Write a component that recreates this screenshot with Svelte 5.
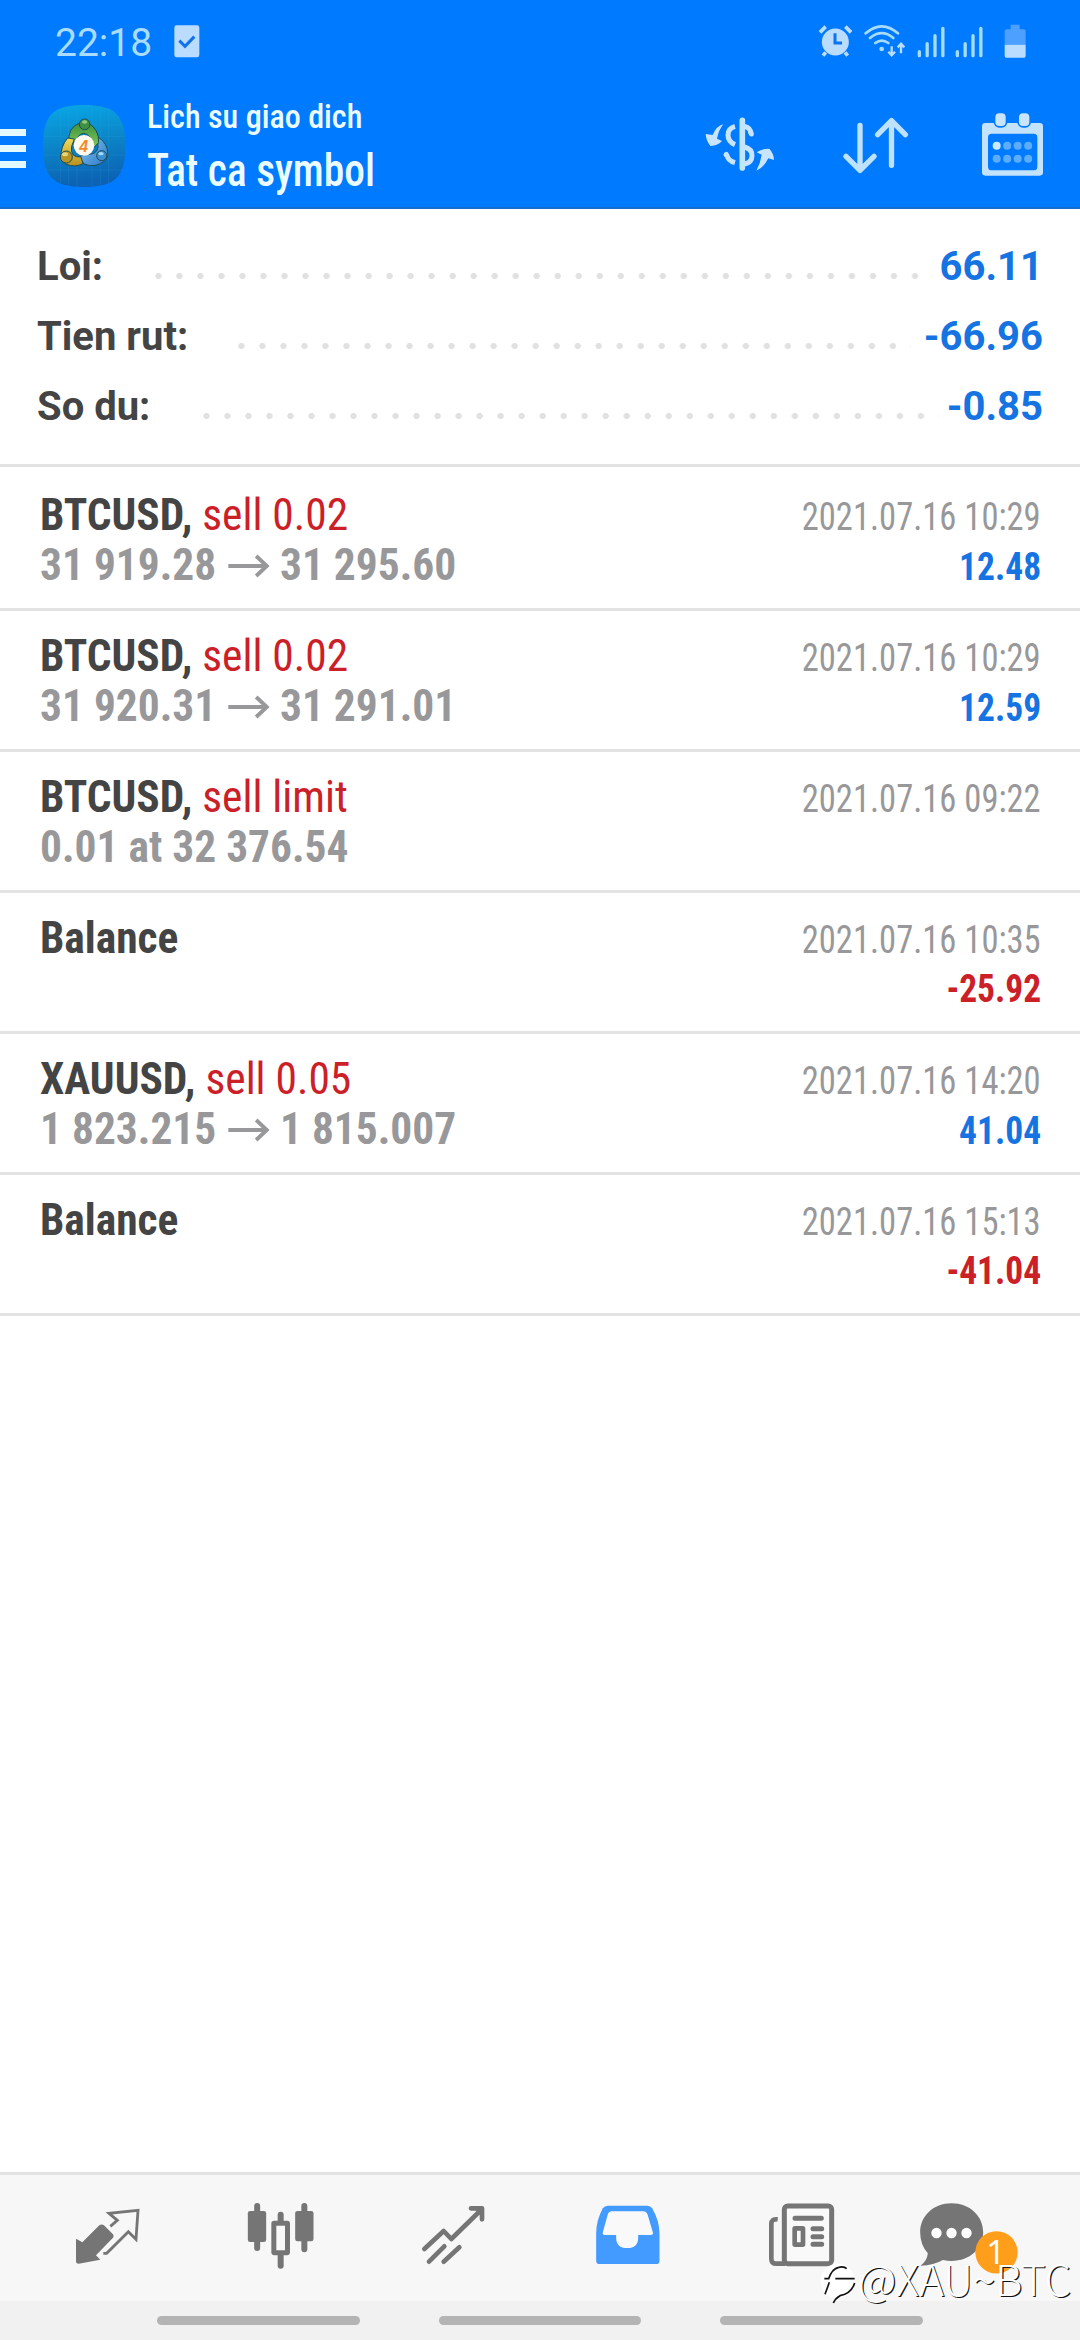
<script>
  const summary = [
    { label: 'Loi:', value: '66.11', start: 118, dots: 37 },
    { label: 'Tien rut:', value: '-66.96', start: 201, dots: 32 },
    { label: 'So du:', value: '-0.85', start: 166, dots: 35 },
  ];

  const deals = [
    { title: 'BTCUSD,', action: 'sell 0.02', from: '31 919.28', to: '31 295.60', time: '2021.07.16 10:29', amount: '12.48' },
    { title: 'BTCUSD,', action: 'sell 0.02', from: '31 920.31', to: '31 291.01', time: '2021.07.16 10:29', amount: '12.59' },
    { title: 'BTCUSD,', action: 'sell limit', from: '0.01 at 32 376.54', time: '2021.07.16 09:22' },
    { title: 'Balance', time: '2021.07.16 10:35', amount: '-25.92' },
    { title: 'XAUUSD,', action: 'sell 0.05', from: '1 823.215', to: '1 815.007', time: '2021.07.16 14:20', amount: '41.04' },
    { title: 'Balance', time: '2021.07.16 15:13', amount: '-41.04' },
  ];
</script>

<div class="screen">
  <header>
    <div class="status">
      <span class="clock">22:18</span>
      <svg class="task" width="26" height="33" viewBox="0 0 78 99">
        <rect x="1" y="1" width="75" height="96" rx="7" fill="#b9dcff" />
        <path d="M16 47l17 17 28-29" fill="none" stroke="#1272ec" stroke-width="9" />
      </svg>
      <div class="indicators">
        <svg width="36.7" height="36.7" viewBox="410 70 110 110">
          <g stroke="#b9dcff" stroke-width="11" fill="none">
            <path d="M419 98l17-17M495 81l17 17" />
            <path d="M436 158l-8 10M494 158l8 10" />
          </g>
          <circle cx="465" cy="127" r="40.500" fill="#b9dcff" />
          <path d="M464 101v29h21" fill="none" stroke="#0b74f0" stroke-width="9" />
        </svg>
        <svg class="wifi" width="44" height="36.7" viewBox="548 70 132 110">
          <g stroke="#a9dcfc" stroke-width="8" fill="none" stroke-linecap="round">
            <path d="M556 101q48-42 97 0M569 115q35-29 70 0M585 130q19-14 39 0" />
          </g>
          <circle cx="604" cy="148" r="7" fill="#a9dcfc" />
          <g stroke="#b9dcff" stroke-width="7" fill="none">
            <path d="M634 140v26M624 156l10 11 10-11M662 161v-27M652 143l10-11 10 11" />
          </g>
        </svg>
        {#each [1, 2] as sim (sim)}
          <svg class="signal" width="30" height="36.7" viewBox="706 70 90 110">
            <path d="M716 156v12M739.500 132v36M763 108v60M786.500 86v82" stroke="#a5dcf8" stroke-width="10" stroke-linecap="round" />
          </svg>
        {/each}
        <svg class="battery" width="24" height="36.7" viewBox="970 70 72 110">
          <path d="M993 75h27v14h13q5 0 5 5v41h-63v-41q0-5 5-5h13z" fill="#4da0ff" />
          <path d="M975 135h63v34q0 5-5 5h-53q-5 0-5-5z" fill="#b9dcff" />
        </svg>
      </div>
    </div>

    <div class="toolbar">
      <div class="burger"><i></i><i></i><i></i></div>
      <svg class="logo" width="82.300" height="82" viewBox="128 315 247 246">
        <defs>
          <linearGradient id="tile" x1="0" y1="0" x2="0.15" y2="1">
            <stop offset="0" stop-color="#08a8e8" />
            <stop offset="0.5" stop-color="#0b86c8" />
            <stop offset="1" stop-color="#0c62b4" />
          </linearGradient>
          <linearGradient id="leaf" x1="0" y1="0" x2="0" y2="1">
            <stop offset="0" stop-color="#3e8f3a" /><stop offset="1" stop-color="#7ccb5c" />
          </linearGradient>
          <linearGradient id="gold" x1="0" y1="0" x2="0" y2="1">
            <stop offset="0" stop-color="#f0dc5c" /><stop offset="1" stop-color="#b98f1c" />
          </linearGradient>
          <linearGradient id="sky" x1="0" y1="0" x2="1" y2="1">
            <stop offset="0" stop-color="#8fd0f5" /><stop offset="1" stop-color="#2472c4" />
          </linearGradient>
        </defs>
        <path d="M251 315C345 315 375 345 375 438S345 561 251 561 128 531 128 438 158 315 251 315z" fill="url(#tile)" />
        <path d="M180 325v226M205 319v238M230 317v242M275 317v242M300 319v238M325 325v226M134 375h236M130 410h243M130 465h243M134 510h236" stroke="#3cb0e0" stroke-width="1.500" opacity="0.3" />
        <g stroke="#1c4d58" stroke-width="3">
          <path d="M292 410q32 20 31 56l-8 16q-30 24-64 10l-14-22 22-8q28 4 34-18z" fill="url(#sky)" />
          <path d="M207 432q-8-51 34-64l22 0q34 20 32 60l-14 14q-10-42-32-42-16 4-22 22z" fill="url(#leaf)" />
          <path d="M202 414q-22 26-20 60l14 18q28 12 52-1l-6-20q-34 2-28-32l8-22z" fill="url(#gold)" />
          <circle cx="253" cy="373" r="16" fill="#3f8f45" />
          <circle cx="198" cy="471" r="18" fill="#b79524" />
          <circle cx="304" cy="467" r="15" fill="#3d8fd2" />
        </g>
        <ellipse cx="253" cy="366" rx="8" ry="5" fill="#8fca80" />
        <ellipse cx="194" cy="463" rx="9" ry="6" fill="#e8d478" />
        <ellipse cx="302" cy="461" rx="8" ry="5" fill="#a4dcf8" />
        <circle cx="251" cy="436" r="31" fill="#fffaf0" />
        <text x="250" y="455" text-anchor="middle" class="four">4</text>
      </svg>
      <div class="heading">
        <div class="sub"><span>Lich su giao dich</span></div>
        <div class="main"><span>Tat ca symbol</span></div>
      </div>
      <div class="actions">
        <svg width="73.300" height="70" viewBox="70 330 220 210">
          <path d="M188 361v143" stroke="#bfe6fc" stroke-width="17" stroke-linecap="round" />
          <g fill="none" stroke="#c9e4fd" stroke-width="15">
            <path d="M166 379q-21 6-21 26t21 29M195 379q18 4 19 22M195 441q22 6 22 26t-22 25M166 488q-22-6-25-25" />
            <path d="M213 396l2 6M140 463l-1 1" stroke-linecap="round" />
          </g>
          <path d="M131 373q-20 4-32 32l-21-3q1 20 14 36 24-2 35-15l-15-7q5-26 19-43zM230 512q22-8 36-37l17 5q0-19-14-34-24 0-38 11l15 7q-3 24-16 48z" fill="#c9e4fd" />
        </svg>
        <svg class="sort" width="66.700" height="70" viewBox="490 330 200 210">
          <path d="M541 376v134M499 469l42 42 42-42M635.500 496v-134M594 404l41.500-42 41.500 42" fill="none" stroke="#bfe2fc" stroke-width="16" stroke-linecap="round" stroke-linejoin="round" />
        </svg>
        <svg class="calendar" width="65" height="70" viewBox="900 330 195 210">
          <path fill-rule="evenodd" d="M916 369h163q10 0 10 10v138q0 10-10 10H916q-10 0-10-10V379q0-10 10-10zM935 401q-11 0-11 11v88q0 11 11 11h126q11 0 11-11v-88q0-11-11-11z" fill="#c3e2fc" />
          <rect x="941" y="335" width="41" height="48" rx="17" fill="#007aff" />
          <rect x="1012" y="335" width="41" height="48" rx="17" fill="#007aff" />
          <rect x="946" y="340" width="31" height="38" rx="12" fill="#c9e4fd" />
          <rect x="1017" y="340" width="31" height="38" rx="12" fill="#c9e4fd" />
          <g fill="#5dadff">
            {#each [981.5, 1013, 1044.5] as cx (cx)}<circle {cx} cy="437" r="12" />{/each}
            {#each [950, 981.5, 1013, 1044.5] as cx (cx)}<circle {cx} cy="476" r="12" />{/each}
          </g>
          <circle cx="950" cy="437" r="12" fill="#c9e9ff" />
        </svg>
      </div>
    </div>
  </header>

  <section class="summary">
    {#each summary as row (row.label)}
      <div class="sum-row">
        <span class="label" style:width="{row.start}px">{row.label}</span>
        <span class="dots" style:width="{row.dots * 21.02}px"></span>
        <span class="value">{row.value}</span>
      </div>
    {/each}
  </section>

  <main>
    {#each deals as deal, i (i)}
      <article>
        <div class="line">
          <span class="title">{deal.title}{#if deal.action}&nbsp;<span class="action">{deal.action}</span>{/if}</span>
          <span class="time">{deal.time}</span>
        </div>
        <div class="line">
          <span class="prices">{deal.from ?? ''}{#if deal.to}<svg class="arrow" width="43" height="24" viewBox="0 0 43 24"><path d="M0 12h40M29 2l11 10-11 10" fill="none" stroke="#98989a" stroke-width="4" /></svg>{deal.to}{/if}</span>
          {#if deal.amount}
            <span class="amount" class:loss={deal.amount.startsWith('-')}>{deal.amount}</span>
          {/if}
        </div>
      </article>
    {/each}
  </main>

  <nav>
    <svg viewBox="-117 0 520.500 300">
      <path d="M48 146l19 11 51-51q7-5 14 0l27 27q4 5 0 10l-51 53 13 13-65 12q-8 0-8-8z" fill="#757575" />
      <path d="M151 109l21-18-25-21 87-9-6 87-23-23-65 65-10 0" fill="none" stroke="#757575" stroke-width="8.500" stroke-linejoin="miter" />
    </svg>
    <svg viewBox="403.500 0 520.500 300">
      <path d="M590 48v126M731.500 48v130M660.500 74v20M660.500 194v33" stroke="#757575" stroke-width="18" stroke-linecap="round" />
      <rect x="562" y="63" width="55" height="93" rx="7" fill="#757575" />
      <rect x="704" y="63" width="55" height="91" rx="7" fill="#757575" />
      <rect x="640" y="100" width="41" height="88" rx="1" fill="#f9f9f9" stroke="#757575" stroke-width="15" />
    </svg>
    <svg viewBox="924 0 520.500 300">
      <path d="M1093 177l58-54 23 24 89-87M1233 55h33v33M1107 215l46-46M1151 215l47-43" fill="none" stroke="#757575" stroke-width="14" stroke-linecap="round" stroke-linejoin="round" />
      <path d="M1244 58h22v24z" fill="#757575" />
    </svg>
    <svg viewBox="-115.500 0 520.500 300">
      <path d="M82 47h119q9 0 14 8 22 38 22 76v81q0 10-10 10H57q-10 0-10-10v-81q0-40 20-76 5-8 15-8z" fill="#449bff" />
      <path d="M94 64h94q9 0 13 9l16 54q2 8-6 8h-38v8q0 31-33 31t-33-31v-8H73q-8 0-6-8l15-54q3-9 12-9z" fill="#f9f9f9" />
    </svg>
    <svg viewBox="405 0 520.500 300">
      <rect x="613" y="48" width="142" height="173" rx="10" fill="#f9f9f9" stroke="#757575" stroke-width="15" />
      <path d="M593 88q-19-2-19 14v104q0 15 15 15h26" fill="none" stroke="#757575" stroke-width="14" />
      <path d="M645 85h79M699 116h26M699 140h26M699 163h26" stroke="#757575" stroke-width="15" stroke-linecap="round" />
      <rect x="644" y="115" width="25" height="49" rx="1" fill="#f9f9f9" stroke="#757575" stroke-width="14" />
    </svg>
    <svg viewBox="925.500 0 520.500 300">
      <path d="M1113 40c55 0 95 38 95 87s-40 86-95 86q-12 0-26-3-26 16-67 17 20-14 22-37-23-25-23-63c0-49 40-87 94-87z" fill="#757575" />
      <g fill="#fff"><circle cx="1068" cy="129" r="15.500" /><circle cx="1113" cy="129" r="15.500" /><circle cx="1158" cy="129" r="15.500" /></g>
      <circle cx="1248" cy="187" r="63.500" fill="#ff9e1b" />
      <text x="1246" y="222" text-anchor="middle" class="badge">1</text>
    </svg>
  </nav>

  <div class="pills"><i></i><i></i><i></i></div>

  <div class="watermark">
    <svg width="38" height="42" viewBox="0 0 114 126">
      <circle cx="53" cy="57" r="52" fill="#fff" />
      <path d="M13 50h13q10-30 30-34 16-4 24 4M46 50h58M28 61L15 97M104 63q-10 32-44 38-14 8-20 22" fill="none" stroke="#111" stroke-width="5" />
    </svg>
    <span>@XAU~BTC</span>
  </div>
</div>

<style>
  :global(body) {
    margin: 0;
    background: #fff;
  }

  .screen {
    position: relative;
    display: flex;
    flex-direction: column;
    width: 1080px;
    height: 2340px;
    overflow: hidden;
    background: #fff;
    font-family: 'Roboto Condensed', Roboto, sans-serif;
    font-stretch: 75%;
  }

  svg {
    display: block;
    flex: none;
  }

  header {
    box-sizing: border-box;
    height: 209px;
    background: #007aff;
    border-bottom: 2px solid #146fd0;
  }

  .status {
    display: flex;
    align-items: flex-start;
    height: 84px;
    box-sizing: border-box;
    padding: 20px 52.7px 0 55px;
  }

  .clock {
    font: 400 39px/46px Roboto, sans-serif;
    font-stretch: 100%;
    color: #a9dcff;
    width: 119px;
  }

  .task {
    margin-top: 4.5px;
  }

  .indicators {
    display: flex;
    margin: 3.3px 0 0 auto;
  }

  .wifi { margin-left: 9.3px; }
  .signal { margin-left: 8.8px; }
  .battery { margin-left: 19px; }

  .toolbar {
    display: flex;
    height: 123px;
  }

  .burger {
    display: flex;
    flex-direction: column;
    gap: 9px;
    width: 26px;
    padding-top: 44.5px;
  }

  .burger i {
    height: 7px;
    background: #e2f9ff;
  }

  .logo { margin: 21px 0 0 16.7px; }

  .four {
    font: italic 700 48px 'Liberation Sans', sans-serif;
    fill: #f08a2c;
  }

  .heading {
    padding: 8px 0 0 22px;
    color: #eafcff;
    font-weight: 500;
    white-space: nowrap;
  }

  .heading span {
    display: inline-block;
    transform-origin: left;
  }

  .sub { font-size: 34px; line-height: 48px; }
  .sub span { transform: scaleX(0.945); }
  .main { font-size: 46px; line-height: 61px; }
  .main span { transform: scaleX(0.9); }

  .actions {
    display: flex;
    margin: 26px 35px 0 auto;
  }

  .sort { margin-left: 66.7px; }
  .calendar { margin-left: 70px; }

  .summary {
    padding: 23px 37px 22px 37px;
    border-bottom: 3px solid #e3e3e3;
    font: 700 40px/70px Roboto, sans-serif;
    font-stretch: 100%;
    white-space: nowrap;
  }

  .sum-row {
    display: flex;
    align-items: center;
    height: 70px;
  }

  .label { color: #444; flex: none; }

  .dots {
    flex: none;
    height: 6px;
    margin-top: 17px;
    background: radial-gradient(circle at 3.4px 3px, #e1e1e1 2.8px, transparent 3.4px) 0 0 / 21.02px 6px repeat-x;
  }

  .value {
    margin-left: auto;
    color: #1673e2;
  }

  main {
    flex: 1;
    padding-top: 3px;
  }

  article {
    box-sizing: border-box;
    height: 141px;
    padding: 19.6px 39px 0 40px;
    border-bottom: 3px solid #e3e3e3;
  }

  .line {
    display: flex;
    align-items: baseline;
    justify-content: space-between;
    height: 50px;
    line-height: 50px;
    white-space: nowrap;
  }

  .title,
  .prices {
    font-size: 45px;
    font-weight: 700;
    transform: scaleX(0.965);
    transform-origin: left;
  }

  .title { color: #444; }
  .action { font-weight: 400; color: #cb2027; }
  .prices { color: #98989a; }
  .arrow { display: inline-block; margin: 0 11px 0 12px; vertical-align: 2px; }

  .time,
  .amount {
    font-size: 39px;
    transform-origin: right;
  }

  .time { color: #98989a; transform: scaleX(0.886); }
  .amount { font-weight: 700; color: #1673e2; transform: scaleX(0.91); }
  .loss { color: #cb2027; }

  /* Rows without a price leave the first baseline empty, so the amount sets its own. */
  .loss { margin-top: 1px; }

  nav {
    box-sizing: border-box;
    display: flex;
    height: 129px;
    padding: 15px 18px 0 21px;
    border-top: 3px solid #e3e3e3;
    background: #f7f7f7;
  }

  nav svg {
    width: 173.5px;
    height: 100px;
  }

  .badge {
    font: 400 100px 'Noto Sans', sans-serif;
    fill: #fff;
  }

  .pills {
    box-sizing: border-box;
    display: flex;
    gap: 79px;
    height: 39px;
    padding: 15px 0 0 157px;
    background: #f1f1f1;
  }

  .pills i {
    width: 202.500px;
    height: 9px;
    border-radius: 5px;
    background: #b4b4b4;
  }

  .watermark {
    position: absolute;
    left: 820px;
    top: 2262px;
    display: flex;
    align-items: flex-start;
    color: #fff;
    font: 300 42px/42px 'Noto Sans CJK SC', sans-serif;
    text-shadow: 1.200px 1px 0 #111;
    white-space: nowrap;
  }

  .watermark span {
    margin-top: -5px;
  }
</style>
